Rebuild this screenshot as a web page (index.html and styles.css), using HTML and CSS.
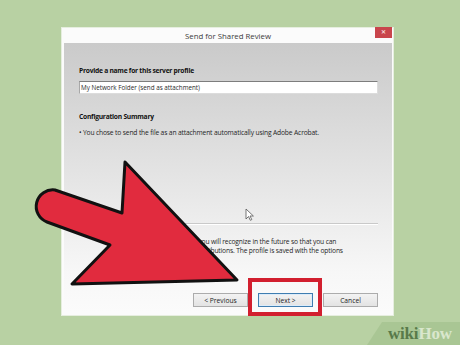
FILE: index.html
```html
<!DOCTYPE html>
<html lang="en">
<head>
    <meta charset="UTF-8">
    <meta name="viewport" content="width=device-width, initial-scale=1.0">
    <title>Send for Shared Review</title>
    <link rel="stylesheet" href="styles.css">
</head>
<body>
    <div class="window">
        <div class="titlebar">
            <span class="title">Send for Shared Review</span>
            <span class="close">&#x2715;</span>
        </div>
        <div class="content">
            <div class="heading first">Provide a name for this server profile</div>
            <div class="field">My Network Folder (send as attachment)</div>
            <div class="heading summary">Configuration Summary</div>
            <div class="bullet">&bull; You chose to send the file as an attachment automatically using Adobe Acrobat.</div>
            <div class="separator"></div>
            <div class="note">
                <div>Type a name for a profile that you will recognize in the future so that you can</div>
                <div>pick it for new shared review distributions. The profile is saved with the options</div>
            </div>
            <div class="buttons">
                <button class="btn">&lt; Previous</button>
                <button class="btn default">Next &gt;</button>
                <button class="btn">Cancel</button>
            </div>
        </div>
    </div>

    <div class="highlight"></div>

    <svg class="pointer" width="460" height="345" viewBox="0 0 460 345">
        <path d="M55 190 L122 213 L125 162 L237 280 L72 284 L110 245 L47 222 A16.6 16.6 0 0 1 55 190 Z"
              fill="#e12b3e" stroke="#111" stroke-width="3" stroke-linejoin="round"/>
        <path d="M246 209 L246 219 L248.5 216.5 L250.3 220.3 L251.8 219.6 L250 216 L253.4 216 Z"
              fill="#fff" stroke="#555" stroke-width="0.8" stroke-linejoin="round"/>
    </svg>

    <div class="watermark"><span class="wiki">wiki</span><span class="how">How</span></div>
</body>
</html>
```

FILE: styles.css
```css
body {
    margin: 0;
    width: 460px;
    height: 345px;
    overflow: hidden;
    background-color: #b8d1a3;
    font-family: "Open Sans", "Noto Sans", sans-serif;
    padding: 27px 0 0 61px;
    box-sizing: border-box;
    position: relative;
}
.window {
    width: 333px;
    height: 289px;
    background: #fbfbfb;
    border: 1px solid #e6eedf;
    box-sizing: border-box;
    padding: 0 1px 3px 2px;
    display: flex;
    flex-direction: column;
}
.titlebar {
    height: 15px;
    display: flex;
    justify-content: center;
    position: relative;
}
.title {
    font-size: 7.8px;
    line-height: 16px;
    color: #3a3a3a;
}
.close {
    position: absolute;
    right: 0;
    top: -1px;
    width: 17px;
    height: 11px;
    background: #c9454c;
    color: #f3d6d6;
    font-size: 6px;
    line-height: 11px;
    text-align: center;
    font-weight: bold;
}
.content {
    flex: 1;
    background: linear-gradient(#cacaca, #f7f7f7 85%, #fbfbfb);
    padding: 0 14px 0 15px;
    font-size: 6.7px;
    line-height: 9px;
    color: #1e1e1e;
}
.heading {
    font-weight: bold;
    color: #111;
    letter-spacing: -0.25px;
}
.heading.first {
    margin-top: 23px;
}
.field {
    margin-top: 6px;
    height: 13px;
    line-height: 12px;
    font-size: 6.3px;
    background: #fff;
    border: 1px solid #dcdcdc;
    border-top-color: #7d7d7d;
    border-left-color: #a8a8a8;
    box-sizing: border-box;
    padding-left: 1px;
    color: #2a2a2a;
}
.heading.summary {
    margin-top: 18px;
}
.bullet {
    margin-top: 7px;
    letter-spacing: -0.15px;
}
.separator {
    margin-top: 86px;
    height: 1px;
    background: #c9c9c9;
    border-bottom: 1px solid #fff;
}
.note {
    margin-top: 12px;
    padding-left: 30px;
    letter-spacing: -0.15px;
}
.buttons {
    margin-top: 38px;
    display: flex;
    justify-content: flex-end;
    gap: 10px;
}
.btn {
    width: 55px;
    height: 14px;
    padding: 0;
    font-family: inherit;
    font-size: 6.7px;
    color: #222;
    background: linear-gradient(#f3f3f3, #e3e3e3);
    border: 1px solid #acacac;
}
.btn.default {
    border-color: #3f7db0;
    box-shadow: inset 0 0 0 1px #dcecfa;
}
.highlight {
    position: absolute;
    left: 248px;
    top: 278px;
    width: 74px;
    height: 38px;
    border: 4px solid #d21f2f;
    box-sizing: border-box;
}
.pointer {
    position: absolute;
    left: 0;
    top: 0;
}
.watermark {
    position: absolute;
    right: 0;
    bottom: 0;
    width: 93px;
    height: 23px;
    background: #a9c694;
    clip-path: polygon(15px 0, 100% 0, 100% 100%, 0 100%);
    font-family: "Liberation Serif", serif;
    font-weight: bold;
    font-size: 17px;
    line-height: 23px;
    padding-left: 21px;
    box-sizing: border-box;
    letter-spacing: -0.2px;
}
.wiki {
    color: #587a4a;
}
.how {
    color: #d9e7cd;
}
```
